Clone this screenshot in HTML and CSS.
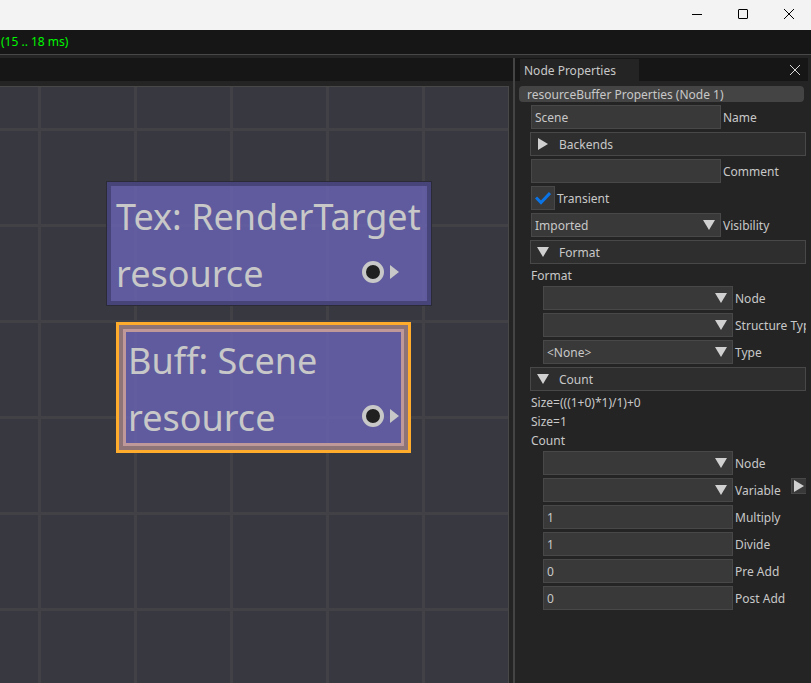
FILE: index.html
```html
<!DOCTYPE html>
<html lang="en">
<head>
<meta charset="utf-8">
<title>Node Properties</title>
<link rel="stylesheet" href="styles.css">
</head>
<body>
<div class="app">
  <header class="titlebar">
    <button class="win-btn" aria-label="Minimize"><svg width="12" height="12" viewBox="0 0 12 12"><path d="M1 6.5H11"/></svg></button>
    <button class="win-btn" aria-label="Maximize"><svg width="12" height="12" viewBox="0 0 12 12"><rect x="1.5" y="1.5" width="9" height="9" rx="0.5"/></svg></button>
    <button class="win-btn" aria-label="Close"><svg width="12" height="12" viewBox="0 0 12 12"><path d="M1 1L11 11M11 1L1 11"/></svg></button>
  </header>
  <div class="menubar"><span class="timing">(15 .. 18 ms)</span></div>
  <div class="workspace">
    <main class="graph">
      <div class="tabbar"></div>
      <div class="canvas">
        <section class="node node-texture">
          <div class="node-title">Tex: RenderTarget</div>
          <div class="node-row"><span>resource</span>
            <svg class="pin" width="38" height="24" viewBox="0 0 38 24"><circle cx="12" cy="12" r="9" fill="#202020" stroke="#c8c8c8" stroke-width="4"/><path d="M29 5V19L38 12Z" fill="#c8c8c8"/></svg>
          </div>
        </section>
        <section class="node node-buffer">
          <div class="node-inner">
            <div class="node-title">Buff: Scene</div>
            <div class="node-row"><span>resource</span>
              <svg class="pin" width="38" height="24" viewBox="0 0 38 24"><circle cx="12" cy="12" r="9" fill="#202020" stroke="#c8c8c8" stroke-width="4"/><path d="M29 5V19L38 12Z" fill="#c8c8c8"/></svg>
            </div>
          </div>
        </section>
      </div>
    </main>
    <div class="splitter"></div>
    <aside class="panel">
      <div class="tabbar panel-tabs">
        <button class="tab">Node Properties</button>
        <button class="tab-close" aria-label="Close panel"><svg width="12" height="12" viewBox="0 0 12 12"><path d="M1 1L11 11M11 1L1 11"/></svg></button>
      </div>
      <h1 class="heading">resourceBuffer Properties (Node 1)</h1>
      <form class="props">
        <div class="row"><input class="field" id="name" type="text" value="Scene"><label for="name">Name</label></div>
        <button class="section" type="button" aria-expanded="false"><svg width="12" height="12" viewBox="0 0 12 12"><path d="M1 0V12L11 6Z"/></svg>Backends</button>
        <div class="row"><input class="field" id="comment" type="text"><label for="comment">Comment</label></div>
        <div class="row"><span class="check"><input id="transient" type="checkbox" checked><svg width="16" height="14" viewBox="0 0 16 14"><path d="M1 6.5L6 11.5L15 2"/></svg></span><label for="transient">Transient</label></div>
        <div class="row"><span class="combo"><select class="field" id="visibility"><option>Imported</option></select></span><label for="visibility">Visibility</label></div>
        <button class="section" type="button" aria-expanded="true"><svg width="12" height="12" viewBox="0 0 12 12"><path d="M0 1H12L6 11Z"/></svg>Format</button>
        <p class="line">Format</p>
        <div class="group">
          <div class="row"><span class="combo"><select class="field" id="format-node"><option></option></select></span><label for="format-node">Node</label></div>
          <div class="row"><span class="combo"><select class="field" id="format-struct"><option></option></select></span><label for="format-struct">Structure Type</label></div>
          <div class="row"><span class="combo"><select class="field" id="format-type"><option>&lt;None&gt;</option></select></span><label for="format-type">Type</label></div>
        </div>
        <button class="section" type="button" aria-expanded="true"><svg width="12" height="12" viewBox="0 0 12 12"><path d="M0 1H12L6 11Z"/></svg>Count</button>
        <p class="line">Size=(((1+0)*1)/1)+0</p>
        <p class="line">Size=1</p>
        <p class="line">Count</p>
        <div class="group">
          <div class="row"><span class="combo"><select class="field" id="count-node"><option></option></select></span><label for="count-node">Node</label></div>
          <div class="row"><span class="combo"><select class="field" id="count-var"><option></option></select></span><label for="count-var">Variable</label><button class="go" type="button" aria-label="Go to variable"><svg width="12" height="12" viewBox="0 0 12 12"><path d="M1 0V12L11 6Z"/></svg></button></div>
          <div class="row"><input class="field" id="multiply" type="text" value="1"><label for="multiply">Multiply</label></div>
          <div class="row"><input class="field" id="divide" type="text" value="1"><label for="divide">Divide</label></div>
          <div class="row"><input class="field" id="pre-add" type="text" value="0"><label for="pre-add">Pre Add</label></div>
          <div class="row"><input class="field" id="post-add" type="text" value="0"><label for="post-add">Post Add</label></div>
        </div>
      </form>
    </aside>
  </div>
</div>
</body>
</html>
```
FILE: styles.css
```css
* { box-sizing: border-box; }

body {
  margin: 0;
  background: #242424;
  color: #c8c8c8;
  font: 12px/16px "Noto Sans", sans-serif;
}

button, input, select {
  font: inherit;
  color: inherit;
  margin: 0;
  padding: 0;
  border: 0;
  border-radius: 0;
  background: none;
}

svg { display: block; flex: none; }

.app {
  display: flex;
  flex-direction: column;
  height: 100vh;
  overflow: hidden;
}

.titlebar {
  display: flex;
  justify-content: flex-end;
  height: 30px;
  flex: none;
  background: #f3f3f3;
}

.win-btn {
  display: flex;
  align-items: center;
  justify-content: center;
  width: 46px;
  padding: 0 0 2px 1px;
}

.win-btn svg, .tab-close svg {
  fill: none;
  stroke: #000;
  stroke-width: 1;
}

.menubar {
  flex: none;
  height: 25px;
  padding: 4px 1px;
  background: #161616;
  border-bottom: 1px solid #484848;
}

.timing { color: #00f800; }

.workspace {
  display: grid;
  grid-template-columns: minmax(0, 1fr) 2px 296px;
  flex: 1;
  min-height: 0;
  padding-top: 3px;
}

.graph { display: flex; flex-direction: column; min-width: 0; }

.tabbar { height: 23px; flex: none; background: #161616; }

.canvas {
  position: relative;
  flex: 1;
  margin: 5px 4px 0 0;
  overflow: hidden;
  border: 1px solid #484848;
  border-width: 1px 1px 0 0;
  background-color: #383840;
  background-image:
    linear-gradient(90deg, #424246 3px, transparent 3px),
    linear-gradient(#424246 3px, transparent 3px);
  background-size: 96px 96px;
  background-position: 38px 0, 0 41px;
}

.splitter { background: #444; }

.node {
  position: absolute;
  background: rgba(102, 98, 175, 0.85);
  background-clip: padding-box;
  font-size: 36px;
  line-height: 54px;
  white-space: nowrap;
}

.node-texture {
  left: 107px;
  top: 95px;
  width: 324px;
  padding: 4px 28px 0 5px;
  border: 4px solid #474479;
  outline: 1px solid #2b2b38;
}

.node-buffer {
  left: 116px;
  top: 235px;
  width: 295px;
  border: 3px solid #ffac2c;
}

.node-inner {
  padding: 2px 2px 0;
  border: 3px solid #bf9999;
  margin: 4px;
  outline: 4px solid #8f7477;
}

.node-title { margin-bottom: 5px; }

.node-row {
  display: flex;
  align-items: center;
  justify-content: space-between;
  height: 50px;
}

.node-texture .node-row { margin-bottom: 2px; }

.pin { margin-bottom: 4px; }

.panel { min-width: 0; overflow: hidden; }

.panel-tabs {
  display: flex;
  justify-content: space-between;
  margin-right: 3px;
  padding: 1px 7px 0 5px;
}

.tab {
  width: 119px;
  padding: 2px 4px 0;
  background: #242424;
  text-align: left;
}

.tab-close svg { stroke: #d8d8d8; }

.heading {
  margin: 5px 7px 3px 4px;
  padding: 1px 0 0 8px;
  border-radius: 4px;
  background: #444;
  font-size: 12px;
  font-weight: 400;
  line-height: 15px;
}

.props {
  display: flex;
  flex-direction: column;
  gap: 3px;
  margin-right: 5px;
  padding-left: 16px;
  overflow: hidden;
}

.group {
  display: flex;
  flex-direction: column;
  gap: 3px;
  padding-left: 12px;
}

.row {
  display: flex;
  align-items: center;
  gap: 2px;
  height: 24px;
  white-space: nowrap;
}

.row label { padding-top: 1px; }

.field {
  width: 190px;
  height: 24px;
  flex: none;
  padding: 1px 3px 0;
  border: 1px solid #484848;
  background: #393939;
  outline: none;
}

.combo { position: relative; flex: none; }

.combo .field { display: block; appearance: none; }

.combo::after {
  content: "";
  position: absolute;
  top: 7px;
  right: 6px;
  border: 6px solid transparent;
  border-top: 10px solid #d0d0d0;
  border-bottom: 0;
  pointer-events: none;
}

.check {
  display: grid;
  place-items: center;
  width: 24px;
  height: 24px;
  border: 1px solid #484848;
  background: #393939;
}

.check input { grid-area: 1 / 1; width: 22px; height: 22px; appearance: none; }

.check svg {
  grid-area: 1 / 1;
  fill: none;
  stroke: #0a74e6;
  stroke-width: 3;
  pointer-events: none;
}

.section {
  display: flex;
  align-items: center;
  gap: 10px;
  height: 24px;
  margin-left: -1px;
  padding: 2px 6px 0;
  border: 1px solid #484848;
  background: #2e2e2e;
}

.section svg { margin-bottom: 2px; }

.section svg, .go svg { fill: #d0d0d0; }

.line { margin: 0; padding-top: 1px; line-height: 15px; }

.go {
  display: flex;
  align-items: center;
  justify-content: center;
  flex: none;
  align-self: flex-start;
  width: 15px;
  height: 16px;
  margin-left: auto;
  border: 1px solid #484848;
  border-right: 0;
  background: #393939;
}
```
